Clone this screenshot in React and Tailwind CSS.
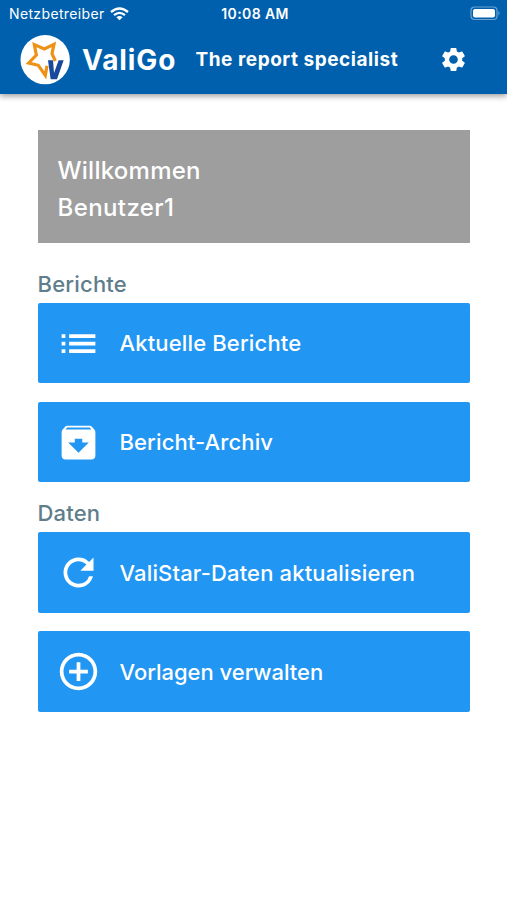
import React from "react";
import { MdList, MdArchive, MdRefresh, MdAddCircleOutline, MdSettings } from "react-icons/md";

function Logo() {
  return (
    <svg className="h-[50px] w-[50px] shrink-0" viewBox="0 0 150 150" aria-hidden="true">
      <circle cx="75.5" cy="74" r="74" fill="#fff" />
      <path
        d="M81 92 L76 121 L55 91 L26 84 L49 60 L43 29 L73 42 L102 28 L96 56 L106 78"
        fill="none"
        stroke="#ee9114"
        strokeWidth="9.5"
        strokeMiterlimit="5"
      />
      <path d="M84 76 H99 L102 114 L116 76 H131 L111 133 H92 Z" fill="#174a9c" />
    </svg>
  );
}

function StatusBar() {
  return (
    <div className="flex h-[27px] items-center text-white">
      <div className="flex flex-1 items-center gap-[5px] pl-[9px]">
        <span className="text-[14px] tracking-[0.36px]">Netzbetreiber</span>
        <svg className="h-[14px] w-[19px]" viewBox="0 0 19 14" fill="none" stroke="#fff" strokeWidth="2.3">
          <path d="M1 5 Q9.5 -2 18 5" />
          <path d="M4 8.2 Q9.5 3.6 15 8.2" />
          <path d="M9.5 13.3 L6.4 10.2 Q9.5 7.6 12.6 10.2 Z" fill="#fff" stroke="none" />
        </svg>
      </div>
      <span className="text-[14px] font-semibold tracking-[0.4px]">10:08 AM</span>
      <div className="flex flex-1 justify-end pr-[6px]">
        <svg className="h-[15px] w-[31px]" viewBox="0 0 31 15">
          <rect x="1" y="1" width="26" height="12.5" rx="3.5" fill="none" stroke="#fff" strokeOpacity=".42" strokeWidth="1.2" />
          <rect x="3" y="3" width="22" height="8.5" rx="2" fill="#fff" />
          <path d="M28.5 5 Q30.5 7.2 28.5 9.4Z" fill="#fff" fillOpacity=".5" />
        </svg>
      </div>
    </div>
  );
}

function ActionButton({ icon: Icon, label, className }) {
  return (
    <button className={`flex w-full items-center rounded-[2px] bg-[#2196f3] pl-[18px] text-left text-white ${className}`}>
      <Icon className="h-[45px] w-[45px] shrink-0" />
      <span className="ml-[19px] whitespace-nowrap text-[22px] font-medium leading-[30px]">{label}</span>
    </button>
  );
}

export default function App() {
  return (
    <div className="h-[900px] w-[507px] overflow-hidden bg-white font-['Inter',sans-serif]">
      <header className="h-[94px] bg-[#0060ad] shadow-[0_2px_6px_rgba(0,0,0,0.4)]">
        <StatusBar />
        <div className="flex h-[65px] items-center pl-[20px] text-white">
          <Logo />
          <h1 className="ml-[12px] w-[113.5px] whitespace-nowrap text-[28px] font-bold tracking-[0.9px]">ValiGo</h1>
          <p className="w-[243px] whitespace-nowrap pt-[2px] text-[19px] font-bold tracking-[0.54px]">The report specialist</p>
          <MdSettings className="h-[29px] w-[29px]" />
        </div>
      </header>
      <main className="pl-[37.5px] pr-[37px] pt-[36px]">
        <section className="h-[113px] bg-[#9e9e9e] pl-[20px] pt-[22px] text-[24px] font-medium leading-[37px] text-white">
          <p className="tracking-[0.25px]">Willkommen</p>
          <p className="tracking-[0.4px]">Benutzer1</p>
        </section>
        <h2 className="mt-[26px] h-[34px] text-[22px] leading-[30px] font-medium tracking-[0.2px] text-[#607d8b]">Berichte</h2>
        <div className="flex flex-col gap-[19px]">
          <ActionButton icon={MdList} label="Aktuelle Berichte" className="h-[80px] tracking-[0.15px]" />
          <ActionButton icon={MdArchive} label="Bericht-Archiv" className="h-[80px] tracking-[0.12px]" />
        </div>
        <h2 className="mt-[16px] h-[34px] text-[22px] leading-[30px] font-medium tracking-[0.2px] text-[#607d8b]">Daten</h2>
        <div className="flex flex-col gap-[18px]">
          <ActionButton icon={MdRefresh} label="ValiStar-Daten aktualisieren" className="h-[81px] tracking-[0.15px]" />
          <ActionButton icon={MdAddCircleOutline} label="Vorlagen verwalten" className="h-[81px] tracking-[-0.02px]" />
        </div>
      </main>
    </div>
  );
}
